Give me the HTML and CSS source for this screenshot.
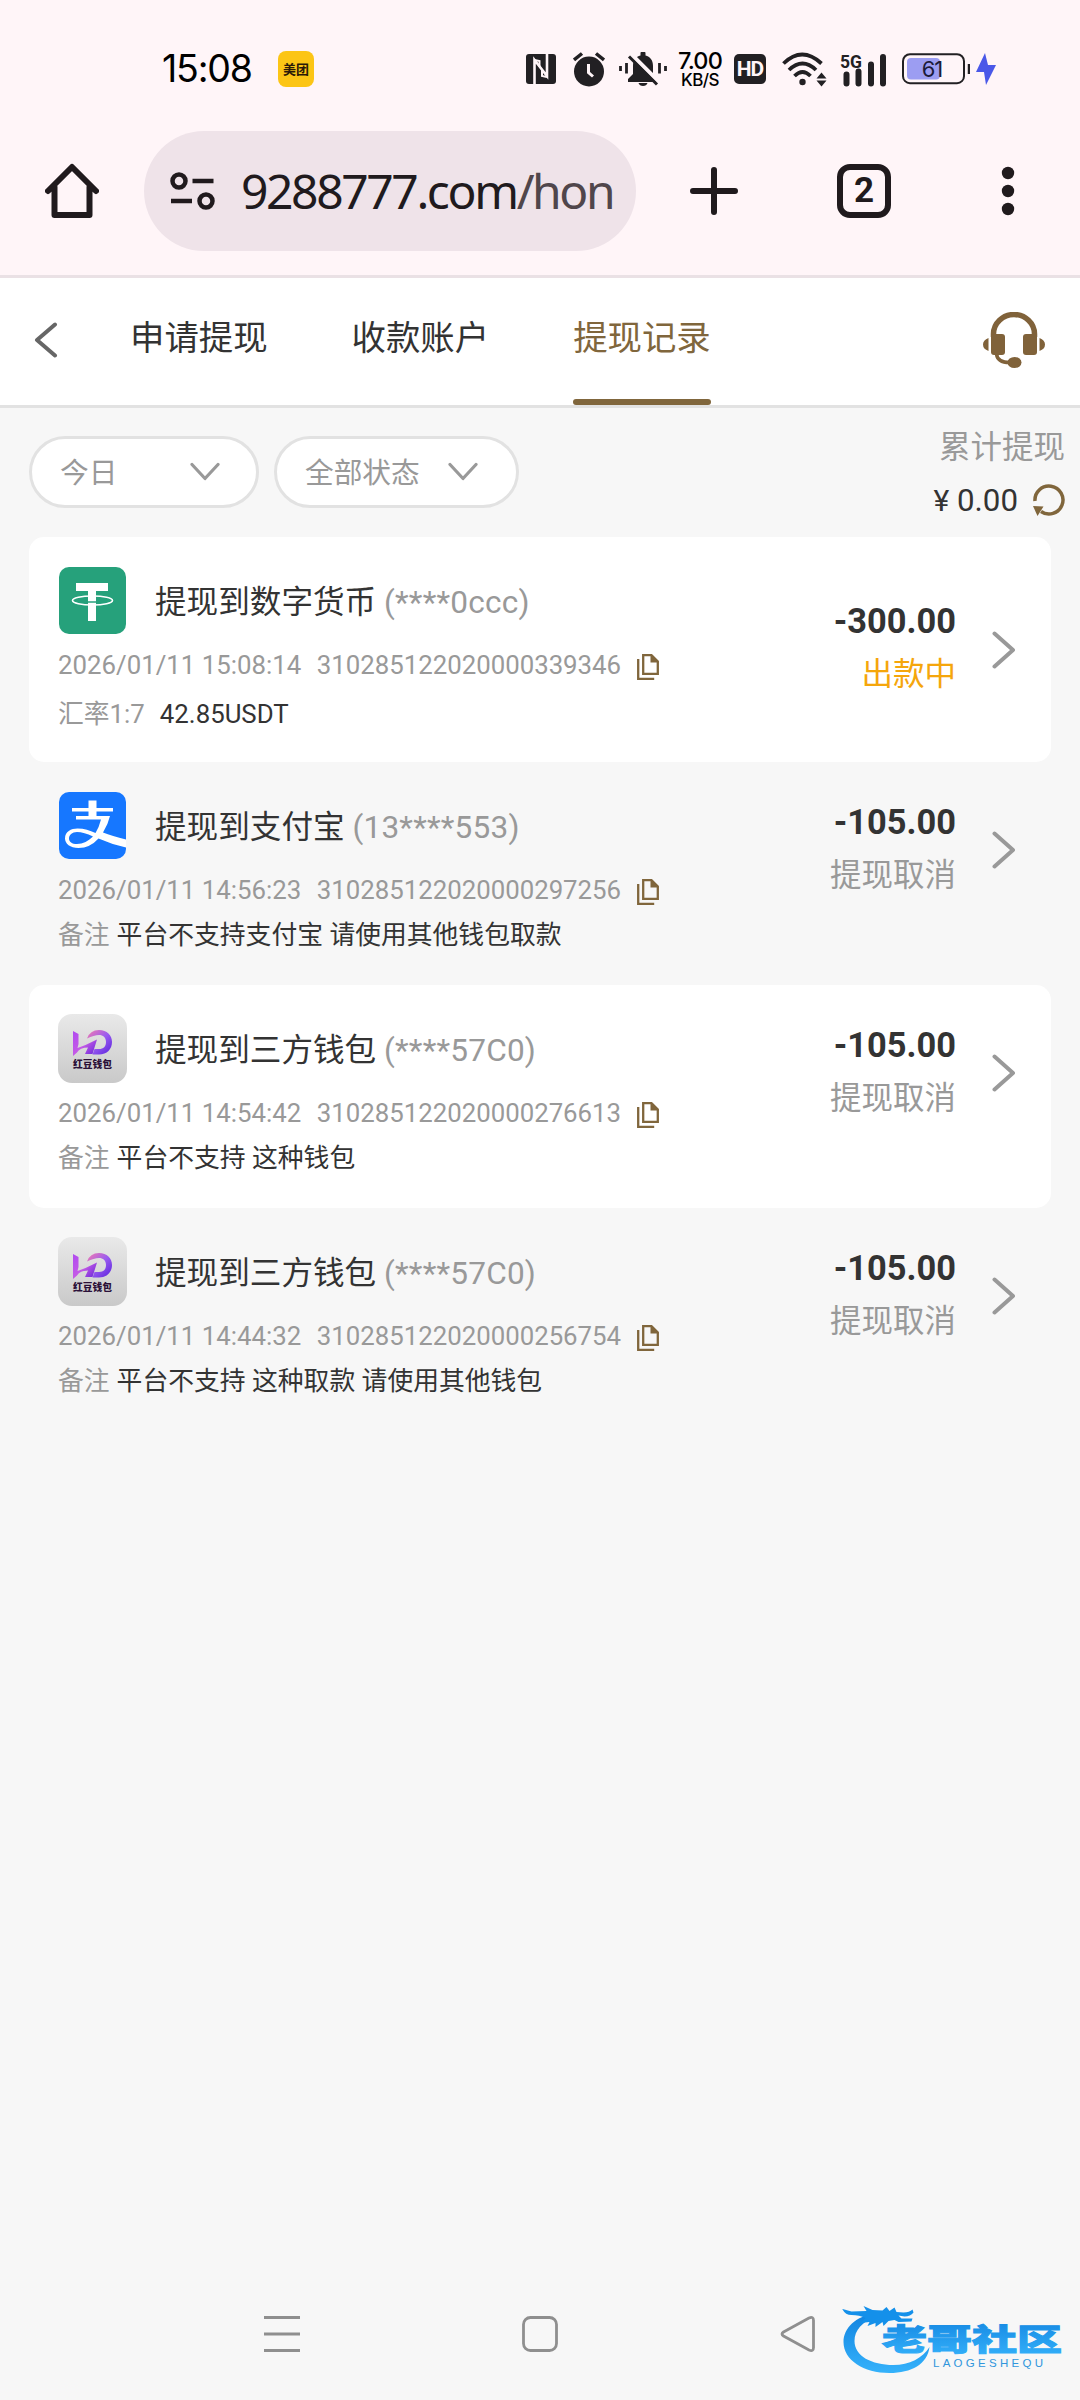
FILE: index.html
```html
<!DOCTYPE html>
<html lang="zh-CN">
<head>
<meta charset="utf-8">
<title>提现记录</title>
<link rel="stylesheet" href="styles.css">
</head>
<body>
<svg class="defs" width="0" height="0" aria-hidden="true">
  <defs>
    <linearGradient id="silver" x1="0" y1="0" x2="0" y2="1"><stop offset="0" stop-color="#e9e9e9"/><stop offset="1" stop-color="#c9c9c9"/></linearGradient>
    <linearGradient id="violet" x1="0" y1="0" x2="1" y2="1"><stop offset="0" stop-color="#b04af0"/><stop offset=".5" stop-color="#c45ae6"/><stop offset="1" stop-color="#5b22d8"/></linearGradient>
    <linearGradient id="pinkarc" x1="0" y1="0" x2="1" y2="1"><stop offset="0" stop-color="#f47cae"/><stop offset=".5" stop-color="#9a5cf0"/><stop offset="1" stop-color="#5a22dc"/></linearGradient>
    <linearGradient id="azure" x1="0" y1="0" x2="0" y2="1"><stop offset="0" stop-color="#1284e0"/><stop offset="1" stop-color="#35b2fb"/></linearGradient>
    <symbol id="copy" viewBox="0 0 22 26"><path d="M1.2 5v19.800h16" fill="none" stroke="#80663c" stroke-width="2.300"/><path d="M6.200 1.200h8.300l6.300 6.300v12.300H6.200z" fill="none" stroke="#80663c" stroke-width="2.300"/><path d="M13.500 0v8.500H22z" fill="#80663c"/></symbol>
    <symbol id="next" viewBox="0 0 24 38"><path d="M2.500 2.500 21 19 2.500 35.500" fill="none" stroke="#999" stroke-width="4" stroke-linecap="round" stroke-linejoin="round"/></symbol>
    <symbol id="down" viewBox="0 0 30 20"><path d="M2 2.500 15 16.500 28 2.500" fill="none" stroke="#999" stroke-width="3.200" stroke-linecap="round" stroke-linejoin="round"/></symbol>
    <symbol id="bean" viewBox="0 0 69 69"><rect width="69" height="69" rx="14" fill="url(#silver)"/><path d="M15 17l5.500 3v10l-1 4 8-3 11.500-5.500L34.500 40H27l3-6.500q-8 0-11 5L15 42z" fill="url(#violet)"/><path d="M29 24.500Q32 16 41 16c8 0 13 5 13 12s-5 12.500-13 12.500h-6.500l2-5.500H41c4.500 0 7-2.500 7-7s-3-7-7-7q-5 0-12 3.500z" fill="url(#pinkarc)"/><text class="bean-name" x="34.500" y="53.500" text-anchor="middle" textLength="39" lengthAdjust="spacingAndGlyphs">红豆钱包</text></symbol>
  </defs>
</svg>

<div class="browser">
  <div class="status">
    <span class="clock">15:08</span>
    <span class="meituan">美团</span>
    <svg class="nfc" width="30" height="30" viewBox="0 0 30 30"><rect width="30" height="30" rx="3" fill="#222023"/><path d="M8.500 30V6l12.500 16V0" fill="none" stroke="#fff5f8" stroke-width="2.600"/><path d="M8.500 6l5 1v6M21 23l-5-1v-6" fill="none" stroke="#fff5f8" stroke-width="2"/></svg>
    <svg class="alarm" width="32" height="35" viewBox="0 0 32 35"><circle cx="16" cy="19.500" r="15" fill="#222023"/><path d="M1 8 9 1.500M31 8l-8-6.500" stroke="#222023" stroke-width="3.500"/><path d="M15.500 12v8.500l4.500 4" fill="none" stroke="#fff5f8" stroke-width="3"/></svg>
    <svg class="bell" width="48" height="34" viewBox="0 0 48 34"><path d="M14 22V14c0-6 3-9.500 7.500-10.500V1.500a2 2 0 0 1 5 0v2C31 4.500 34 8 34 14v9l4 5v2H9v-3z" fill="#222023"/><path d="M19.500 31h9q-1 3-4.500 3t-4.500-3z" fill="#222023"/><path d="M12 2l30 30" stroke="#fff5f8" stroke-width="4"/><path d="M10 4.500l28 28" stroke="#222023" stroke-width="3"/><path d="M1.500 14v5M7.500 11v10.500M40.500 11v10.500M46.500 14v5" stroke="#222023" stroke-width="2.800"/></svg>
    <span class="speed"><b>7.00</b><i>KB/S</i></span>
    <span class="hd">HD</span>
    <svg class="wifi" width="45" height="35" viewBox="0 0 45 35"><g fill="none" stroke="#222023" stroke-width="3.800"><path d="M1.500 11.500q18.500-18 38 0"/><path d="M7 18q13.500-13 27 0"/><path d="M12.500 24q8-8 16 0"/></g><circle cx="20.500" cy="30" r="3.200" fill="#222023"/><path d="M34.500 26.500l5-6 5 6zM34.500 28.500h10l-5 6z" fill="#222023"/></svg>
    <svg class="signal" width="47" height="34" viewBox="0 0 47 34"><text x="0" y="15.500" class="fiveg" textLength="22" lengthAdjust="spacingAndGlyphs">5G</text><path d="M6.500 22.500v9M18.500 19.500v12M31 12.500v19M43 5v26.500" stroke="#222023" stroke-width="6" stroke-linecap="round"/></svg>
    <svg class="battery" width="68" height="32" viewBox="0 0 68 32"><rect x="1" y="1.200" width="61" height="29" rx="7" fill="none" stroke="#222023" stroke-width="2"/><path d="M67 11v10" stroke="#222023" stroke-width="2.500"/><rect x="5" y="5" width="33" height="21.500" rx="4" fill="#9c9df2"/><text x="30" y="23.500" class="percent" text-anchor="middle">61</text></svg>
    <svg class="bolt" width="20" height="32" viewBox="0 0 20 32"><path d="M9 0 0 19h8l2 13 10-20h-8z" fill="#4a58e8"/></svg>
  </div>
  <div class="toolbar">
    <svg class="home" width="54" height="56" viewBox="0 0 54 56"><path d="M3 28 27 4l24 24M9.500 24v28h35V24" fill="none" stroke="#201a1d" stroke-width="6" stroke-linecap="round" stroke-linejoin="round"/></svg>
    <div class="address">
      <svg width="46" height="38" viewBox="0 0 46 38"><g fill="none" stroke="#201a1d" stroke-width="4.500"><circle cx="9" cy="9" r="6.500"/><circle cx="36" cy="29" r="6.500"/><path d="M22.500 9h21M1 29h21"/></g></svg>
      <span class="url">9288777.com<em>/hon</em></span>
    </div>
    <svg class="plus" width="48" height="48" viewBox="0 0 48 48"><path d="M24 3v42M3 24h42" stroke="#201a1d" stroke-width="6" stroke-linecap="round"/></svg>
    <span class="tabs">2</span>
    <svg class="dots" width="14" height="50" viewBox="0 0 14 50"><g fill="#201a1d"><circle cx="7" cy="7" r="6.200"/><circle cx="7" cy="25" r="6.200"/><circle cx="7" cy="43" r="6.200"/></g></svg>
  </div>
</div>

<header class="appbar">
  <svg class="back" width="24" height="36" viewBox="0 0 24 36"><path d="M21 2.500 3 18l18 15.500" fill="none" stroke="#666" stroke-width="4" stroke-linecap="round" stroke-linejoin="round"/></svg>
  <nav class="sections">
    <a>申请提现</a><a>收款账户</a><a class="active">提现记录</a>
  </nav>
  <svg class="headset" width="62" height="56" viewBox="0 0 62 56"><g fill="#80623a"><rect x="8" y="22" width="14" height="21" rx="3"/><rect x="40" y="22" width="14" height="21" rx="3"/><path d="M5.500 26v13Q0 37 0 32.500T5.500 26zM56.500 26v13q5.500-2 5.500-6.500T56.500 26z"/><ellipse cx="31.500" cy="50.500" rx="7" ry="5.500"/></g><path d="M10.500 25v-3a20.500 19.500 0 0 1 41 0v3" fill="none" stroke="#80623a" stroke-width="5.500"/><path d="M13.500 42q1 8.500 13 8.500" fill="none" stroke="#80623a" stroke-width="3.500"/></svg>
</header>

<main class="content">
  <section class="filters">
    <button class="pick day"><span>今日</span><svg width="30" height="20"><use href="#down"/></svg></button>
    <button class="pick state"><span>全部状态</span><svg width="30" height="20"><use href="#down"/></svg></button>
    <div class="total">
      <span class="total-label">累计提现</span>
      <span class="total-sum"><small>¥</small> 0.00<svg width="34" height="34" viewBox="0 0 34 34"><path d="M3 18A14 14 0 1 1 9 28.500" fill="none" stroke="#80663c" stroke-width="3.500"/><path d="M1 23l10.500.5L5.500 33z" fill="#80663c"/></svg></span>
    </div>
  </section>

  <article class="record card exchange">
    <div class="info">
      <div class="title"><svg width="69" height="69" viewBox="0 0 69 69"><rect x="1" y="1" width="67" height="67" rx="10" fill="#26a17b"/><path d="M18 17h32v8h-12v30h-8V25H18z" fill="#fff"/><ellipse cx="34.500" cy="34.500" rx="20" ry="4.500" fill="none" stroke="#fff" stroke-width="1.600"/><path d="M30 36h8" stroke="#26a17b" stroke-width="1.500"/></svg><span>提现到数字货币 <em>(****0ccc)</em></span></div>
      <div class="meta"><span>2026/01/11 15:08:14</span><span>310285122020000339346</span><svg width="22" height="26"><use href="#copy"/></svg></div>
      <div class="note rate"><em>汇率1:7</em><span>42.85USDT</span></div>
    </div>
    <div class="amount"><b>-300.00</b><span class="pending">出款中</span></div>
    <svg class="go" width="24" height="38"><use href="#next"/></svg>
  </article>

  <article class="record">
    <div class="info">
      <div class="title"><svg width="69" height="69" viewBox="0 0 69 69"><rect x="1" y="1" width="67" height="67" rx="10" fill="#1677ff"/><path d="M30.500 9.500h8V17H55v3.500H38.500V25H52q-2 8.500-7 16.500 9 3.500 23 7v8Q54 53.500 40.500 47.500 32 57 20.500 57C12 57 7 52.500 7 47.500c0-7 6-10 12.500-10 7 0 12 2 18 4.500q3.500-5.500 5.500-13.500H18V25h12.500v-4.500H14V17h16.500zM19 41c-5 0-8 3-8 6.500s3 5.500 8 5.500c6 0 11.500-3 16-7.500Q26 41 19 41z" fill="#fff"/></svg><span>提现到支付宝 <em>(13****553)</em></span></div>
      <div class="meta"><span>2026/01/11 14:56:23</span><span>310285122020000297256</span><svg width="22" height="26"><use href="#copy"/></svg></div>
      <div class="note"><em>备注</em><span>平台不支持支付宝 请使用其他钱包取款</span></div>
    </div>
    <div class="amount"><b>-105.00</b><span>提现取消</span></div>
    <svg class="go" width="24" height="38"><use href="#next"/></svg>
  </article>

  <article class="record card">
    <div class="info">
      <div class="title"><svg width="69" height="69"><use href="#bean"/></svg><span>提现到三方钱包 <em>(****57C0)</em></span></div>
      <div class="meta"><span>2026/01/11 14:54:42</span><span>310285122020000276613</span><svg width="22" height="26"><use href="#copy"/></svg></div>
      <div class="note"><em>备注</em><span>平台不支持 这种钱包</span></div>
    </div>
    <div class="amount"><b>-105.00</b><span>提现取消</span></div>
    <svg class="go" width="24" height="38"><use href="#next"/></svg>
  </article>

  <article class="record">
    <div class="info">
      <div class="title"><svg width="69" height="69"><use href="#bean"/></svg><span>提现到三方钱包 <em>(****57C0)</em></span></div>
      <div class="meta"><span>2026/01/11 14:44:32</span><span>310285122020000256754</span><svg width="22" height="26"><use href="#copy"/></svg></div>
      <div class="note"><em>备注</em><span>平台不支持 这种取款 请使用其他钱包</span></div>
    </div>
    <div class="amount"><b>-105.00</b><span>提现取消</span></div>
    <svg class="go" width="24" height="38"><use href="#next"/></svg>
  </article>
</main>

<footer class="sysnav">
  <svg width="36" height="38" viewBox="0 0 36 38"><path d="M0 2.500h36M0 19h36M0 35.500h36" stroke="#8f8f8f" stroke-width="3"/></svg>
  <svg width="36" height="38" viewBox="0 0 36 38"><rect x="1.500" y="2.500" width="33" height="33" rx="7" fill="none" stroke="#8f8f8f" stroke-width="2.800"/></svg>
  <svg width="36" height="38" viewBox="0 0 36 38"><path d="M3.500 17 29 3q4.500-2 4.500 2.500v27q0 4.500-4.500 2.500L3.500 21q-3-2 0-4z" fill="none" stroke="#8f8f8f" stroke-width="2.800"/></svg>
</footer>

<svg class="watermark" width="240" height="90" viewBox="0 0 240 90" aria-label="老哥社区">
  <path d="M34 24C16 26 3.500 38 3.500 52c0 18 20 31 46 31 22 0 38-9 40-26-7 11-20 18-36 18-22 0-39-9-39-24 0-11 8-19 20-24z" fill="url(#azure)"/>
  <path d="M2.500 19l9 2.500 15-.5-3-5 9 4 10 .5 4-3.500 3 4 5-3.500 2 4.500 7 .5q6 0 9-3l1 3q-3 4-9 4l-6-1 3 3h11l-1 3-13 .5-4-2-6 1-5 5-1-4-7 5v-4l-8 3 2-4-9 1 5-5q-6-3-14-3-6 0-9-5.500z" fill="#1490ea"/>
  <text class="brand" x="42" y="60" textLength="180" lengthAdjust="spacingAndGlyphs">老哥社区</text>
  <text class="brand-latin" x="93" y="77" textLength="110">LAOGESHEQU</text>
</svg>
</body>
</html>
```
FILE: styles.css
```css
* { box-sizing: border-box; }
body {
  margin: 0;
  width: 1080px;
  height: 2400px;
  display: flex;
  flex-direction: column;
  position: relative;
  overflow: hidden;
  background: #f7f7f7;
  color: #333;
  font-family: Roboto, "Noto Sans CJK SC", sans-serif;
}
svg { display: block; flex: none; }
em, i { font-style: normal; }
.defs { position: absolute; }

.browser { height: 278px; flex: none; background: #fff5f8; border-bottom: 3px solid #eae1e5; }
.status { height: 131px; padding: 7px 0 0 162px; display: flex; align-items: center; }
.clock { width: 94px; font: 400 37.500px/40px Inter, sans-serif; letter-spacing: -1.200px; color: #000; }
.meituan { width: 36px; height: 36px; margin-left: 22px; border-radius: 8px; background: #fcc515; color: #2b1a08; font: 700 13px/36px "Noto Sans CJK SC", sans-serif; text-align: center; }
.nfc { margin-left: 212px; }
.alarm { margin-left: 17px; }
.bell { margin-left: 14px; }
.speed { width: 48px; margin-left: 9px; display: flex; flex-direction: column; align-items: center; color: #000; }
.speed b { font: 500 23.500px/21px Inter, sans-serif; letter-spacing: -.8px; }
.speed i { font: 500 17px/18px Inter, sans-serif; letter-spacing: -.5px; }
.hd { width: 32px; height: 30px; margin-left: 10px; border-radius: 5px; background: #222023; color: #fff5f8; font: 700 21px/31px Roboto, sans-serif; letter-spacing: -1px; text-align: center; }
.wifi { margin-left: 16px; }
.signal { margin-left: 13px; overflow: visible; }
.fiveg { font: 700 18px Roboto, sans-serif; fill: #222023; }
.battery { margin-left: 15px; }
.percent { font: 400 22px Inter, sans-serif; fill: #1c1b3a; letter-spacing: -1px; }
.bolt { margin-left: 6px; }

.toolbar { height: 120px; padding-left: 45px; display: flex; align-items: center; }
.address { width: 492px; height: 120px; margin-left: 45px; padding-left: 26px; display: flex; align-items: center; border-radius: 60px; background: #efe3e9; }
.url { margin-left: 25px; font: 400 48px/60px "Noto Sans", sans-serif; letter-spacing: -2.400px; color: #201a1d; white-space: nowrap; }
.url em { color: #50464b; }
.plus { margin-left: 54px; }
.tabs { width: 54px; height: 54px; margin-left: 99px; border: 6px solid #201a1d; border-radius: 13px; color: #201a1d; font: 700 35px/42px Roboto, sans-serif; text-align: center; }
.dots { margin-left: 110px; }

.appbar { height: 130px; flex: none; display: flex; align-items: center; padding-left: 34px; background: #fff; border-bottom: 3px solid #e2e2e2; }
.back { margin-bottom: 3px; }
.sections { height: 127px; margin-left: 72px; display: flex; gap: 84px; }
.sections a { height: 127px; font-size: 34.400px; line-height: 121px; }
.sections .active { color: #80663c; position: relative; }
.sections .active::after { content: ""; position: absolute; left: 0; right: 0; bottom: 0; height: 6px; border-radius: 3px; background: #80663c; }
.headset { margin-left: 272px; margin-bottom: 3px; }

.content { flex: 1; padding-left: 29px; }
.filters { height: 129px; display: flex; align-items: flex-start; }
.pick { height: 72px; margin: 28px 15px 0 0; padding: 0 0 0 28px; display: flex; align-items: center; border: 3px solid #e2e2e2; border-radius: 36px; background: #fff; color: #999; font: 400 28.700px/66px Roboto, "Noto Sans CJK SC", sans-serif; }
.pick span { padding-top: 2px; }
.day { width: 230px; }
.day svg { margin-left: 73px; }
.state { width: 245px; }
.state svg { margin-left: 28px; }
.total { flex: 1; padding: 16px 15px 0 0; display: flex; flex-direction: column; align-items: flex-end; }
.total-label { color: #999; font-size: 31.500px; line-height: 48px; }
.total-sum { display: flex; align-items: center; margin-right: -1px; font-size: 31.300px; line-height: 58px; white-space: pre; }
.total-sum small { font-size: 30px; }
.total-sum svg { margin: -2px 0 0 14px; }

.record { width: 1022px; height: 223px; display: flex; align-items: flex-start; padding: 29px 0 0 29px; border-radius: 15px; }
.card { background: #fff; }
.exchange { height: 225px; }
.info { width: 700px; }
.title { display: flex; align-items: center; height: 69px; font-size: 31.600px; line-height: 69px; white-space: nowrap; }
.title svg { margin-right: 28px; }
.title span { padding-top: 3px; }
.title em { letter-spacing: .2px; }
.title em, .meta, .note em { color: #999; }
.meta { display: flex; align-items: center; margin-top: 12px; font-size: 25.800px; line-height: 36px; }
.meta span { margin-right: 15.500px; }
.meta svg { margin-top: 3px; }
.note { display: flex; gap: 7px; margin-top: 12px; font-size: 25.800px; line-height: 30px; white-space: nowrap; }
.rate { margin-top: 16px; gap: 15px; }
.amount { width: 198px; display: flex; flex-direction: column; align-items: flex-end; font-size: 31.500px; color: #999; }
.amount b { color: #333; font-size: 34.400px; line-height: 62px; }
.amount span { line-height: 45px; }
.amount .pending { color: #f5a60c; }
.go { margin: 40px 0 0 36px; }
.exchange .amount { padding-top: 24px; }
.exchange .go { margin-top: 65px; }

.sysnav { height: 132px; flex: none; display: flex; gap: 222px; padding: 47px 0 0 264px; }
.bean-name { font: 900 10px "Noto Sans CJK SC", sans-serif; fill: #2b1038; }
.watermark { position: absolute; left: 840px; top: 2290px; }
.brand { font: 900 30px "Noto Sans CJK SC", sans-serif; fill: url(#azure); stroke: url(#azure); stroke-width: 1px; }
.brand-latin { font: 400 11.500px "Liberation Sans", sans-serif; fill: #3196dc; }
```
